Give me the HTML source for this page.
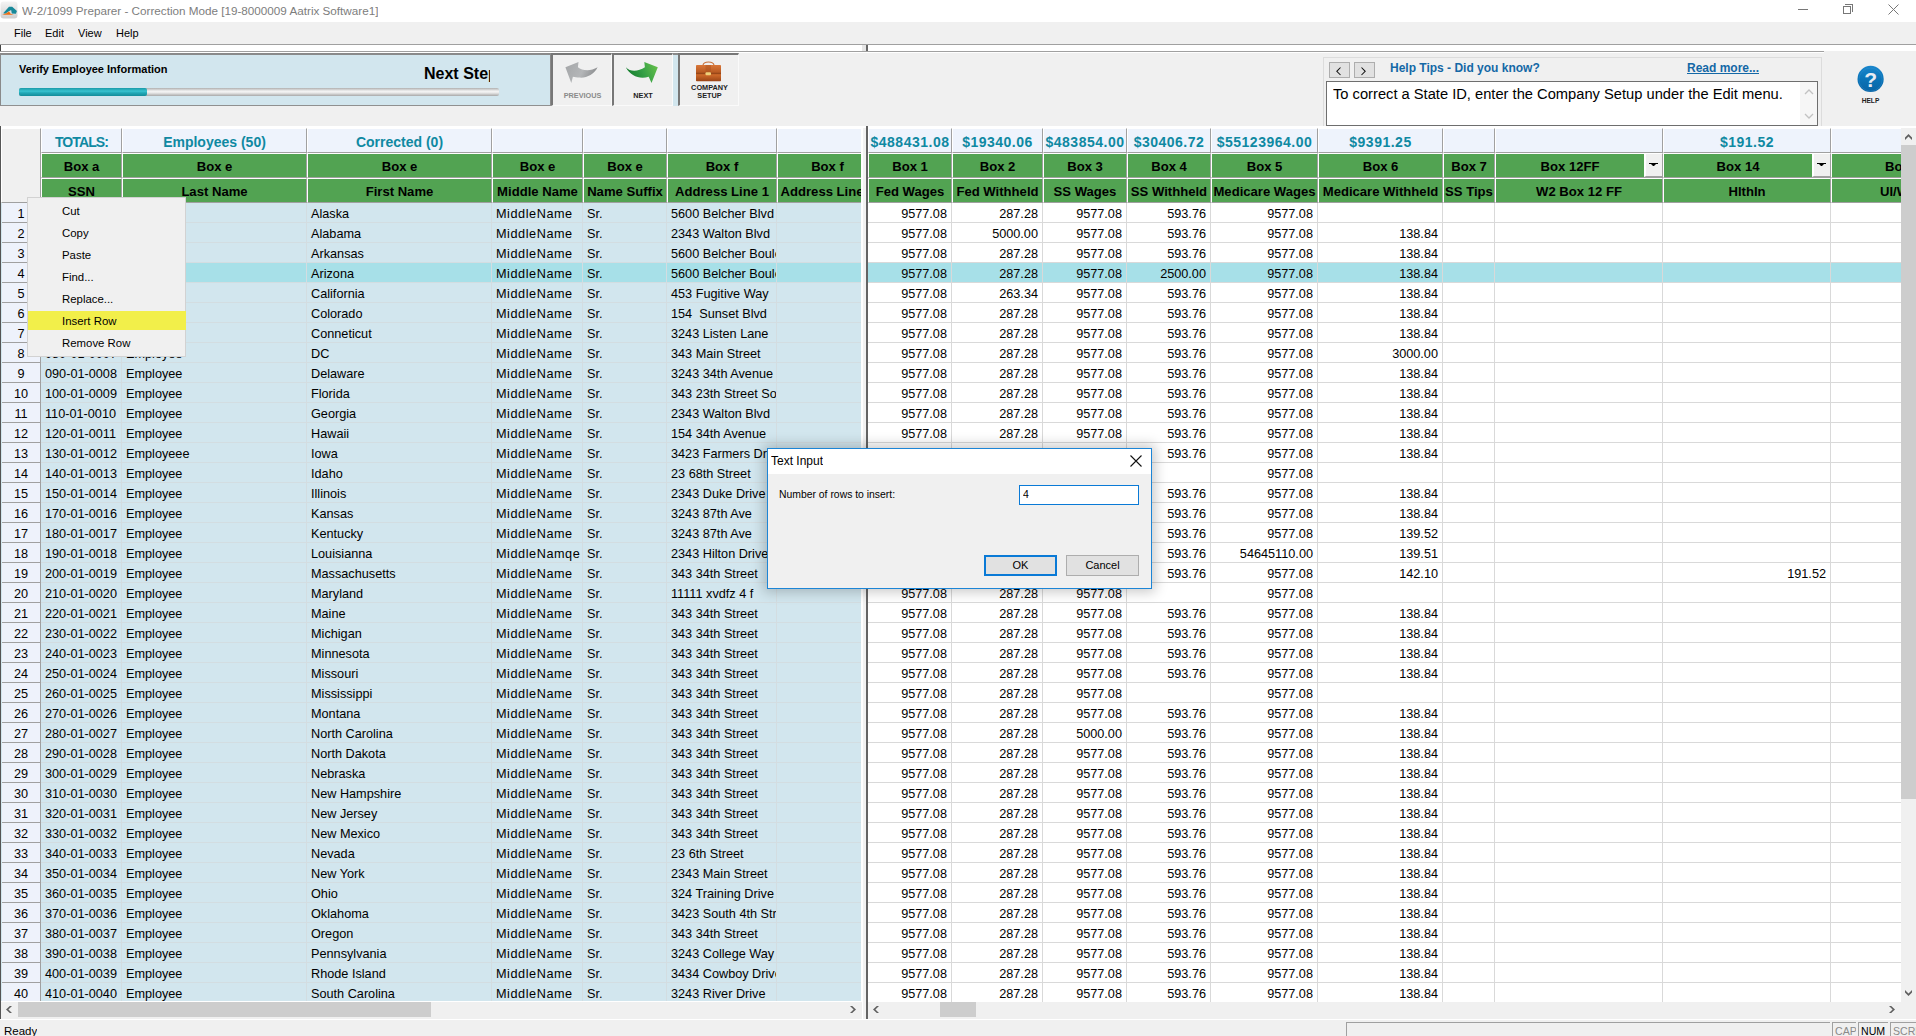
<!DOCTYPE html>
<html><head><meta charset="utf-8"><title>W-2/1099 Preparer</title>
<style>
*{box-sizing:border-box;margin:0;padding:0}
html,body{width:1916px;height:1036px;overflow:hidden;background:#f0f0f0;font-family:"Liberation Sans", sans-serif;color:#000}
.a{position:absolute}
.t{position:absolute;white-space:nowrap;overflow:hidden}
.hc{position:absolute;border-left:1px solid #fff;border-top:1px solid #fff;border-right:1px solid #a0a0a0;border-bottom:1px solid #a0a0a0;overflow:hidden;white-space:nowrap;text-align:center}
.tot{background:#eef3fc;color:#0f89a2;font-weight:bold;font-size:14px;line-height:26px}
.gr{background:#52a352;font-weight:bold;font-size:13.1px;line-height:25px}
.dc{position:absolute;height:20px;border-right:1px solid #d9d9d9;border-bottom:1px solid #d9d9d9;white-space:nowrap;overflow:hidden;font-size:12.7px;line-height:23px}
.lp .dc{border-color:#d3dde1}
.dl{padding-left:4px}
.dr{text-align:right;padding-right:4px}
.rh{position:absolute;left:2px;width:39px;height:20px;background:#eef2fb;border-right:1px solid #a0a0a0;border-bottom:1px solid #a0a0a0;text-align:center;font-size:12.7px;line-height:23px}
.mi{position:absolute;left:28px;width:158px;height:20px;font-size:11.4px;line-height:20px;padding-left:34px}
</style></head><body>

<div class="a" style="left:0;top:0;width:1916px;height:22px;background:#fff"></div>
<svg class="a" style="left:0px;top:1px" width="18" height="18" viewBox="0 0 17 17">
<defs><linearGradient id="ig" x1="0" y1="0" x2="0" y2="1"><stop offset="0" stop-color="#f4f4f4"/><stop offset="1" stop-color="#cfcfcf"/></linearGradient></defs>
<rect x="0.5" y="0.5" width="16" height="16" rx="3" fill="url(#ig)"/>
<path d="M3 11.5 L8.5 5.5 L11.5 5.5 L16 9.5 L15 12 L11.2 11.8 L10.5 8.5 L8 9.8 L5 12 Z" fill="#17899a"/>
<path d="M2 13 L6 11.5 L8.5 10 L10 12 L13 13 Z" fill="#ee6e12"/>
</svg>
<div class="t" style="left:22px;top:3px;font-size:11.7px;line-height:16px;color:#7d7d7d">W-2/1099 Preparer - Correction Mode [19-8000009 Aatrix Software1]</div>
<div class="a" style="left:1798px;top:9px;width:10px;height:1px;background:#777"></div>
<div class="a" style="left:1843px;top:6px;width:8px;height:8px;border:1px solid #777"></div>
<div class="a" style="left:1845px;top:4px;width:8px;height:8px;border-top:1px solid #777;border-right:1px solid #777"></div>
<svg class="a" style="left:1888px;top:4px" width="11" height="11" viewBox="0 0 11 11"><path d="M0.5 0.5 L10.5 10.5 M10.5 0.5 L0.5 10.5" stroke="#777" stroke-width="1"/></svg>
<div class="a" style="left:0;top:22px;width:1916px;height:22px;background:#f0f0f0"></div>
<div class="t" style="left:14px;top:26px;font-size:11px;line-height:14px">File</div>
<div class="t" style="left:45px;top:26px;font-size:11px;line-height:14px">Edit</div>
<div class="t" style="left:78px;top:26px;font-size:11px;line-height:14px">View</div>
<div class="t" style="left:116px;top:26px;font-size:11px;line-height:14px">Help</div>
<div class="a" style="left:0;top:44px;width:1916px;height:1px;background:#a0a0a0"></div>
<div class="a" style="left:0;top:45px;width:1916px;height:6px;background:#fff"></div>
<div class="a" style="left:0;top:45px;width:1px;height:7px;background:#444"></div>
<div class="a" style="left:0;top:51px;width:1824px;height:1px;background:#a0a0a0"></div>
<div class="a" style="left:0;top:52px;width:1824px;height:1px;background:#fff"></div>
<div class="a" style="left:862px;top:45px;width:4px;height:6px;background:#e6e6e6"></div>
<div class="a" style="left:866px;top:45px;width:2px;height:6px;background:#666"></div>
<div class="a" style="left:0;top:53px;width:552px;height:53px;background:#d2e6ee;border-top:2px solid #8a8a8a;border-left:1px solid #8a8a8a;border-bottom:1px solid #909090;border-right:2px solid #8a8a8a"></div>
<div class="t" style="left:19px;top:62px;font-size:11px;line-height:14px;font-weight:bold">Verify Employee Information</div>
<div class="a" style="left:19px;top:88px;width:480px;height:8px;border-radius:2px;background:linear-gradient(#b0b0b0,#f4f4f4 40%,#e8e8e8 60%,#a8a8a8)"></div>
<div class="a" style="left:19px;top:88px;width:128px;height:8px;border-radius:2px;background:linear-gradient(#1a9aa8,#38c3cf 40%,#22aab8 60%,#138c9a)"></div>
<div class="t" style="left:424px;top:63px;width:66px;font-size:16px;line-height:22px;font-weight:bold">Next Step</div>
<div class="a" style="left:551px;top:53px;width:61px;height:53px;background:#f0f0f0;border-top:2px solid #777;border-left:2px solid #777;border-right:1px solid #fafafa;border-bottom:1px solid #fafafa"></div>
<svg class="a" style="left:556px;top:56px" width="48" height="32" viewBox="0 0 48 32"><defs><linearGradient id="pg" x1="0" y1="0" x2="1" y2="0.3"><stop offset="0" stop-color="#a4a6a8"/><stop offset="0.6" stop-color="#b4b6b8"/><stop offset="1" stop-color="#8e9092"/></linearGradient></defs>
<path d="M22.5 6 L21.9 11.3 C26 14.5 34 16 41.6 11.3 C38 18.5 31 22 23.8 21.6 C21 21.4 18.6 20.9 16.9 20.7 L15.3 26.9 L9.4 11.3 Z" fill="url(#pg)"/></svg>
<div class="t" style="left:552px;top:91px;width:61px;text-align:center;font-size:7.3px;line-height:10px;font-weight:bold;color:#8a8a8a">PREVIOUS</div>
<div class="a" style="left:612px;top:53px;width:61px;height:53px;background:#f0f0f0;border-top:2px solid #777;border-left:2px solid #777;border-right:1px solid #fafafa;border-bottom:1px solid #fafafa"></div>
<svg class="a" style="left:612px;top:56px" width="50" height="32" viewBox="0 0 50 32"><defs><linearGradient id="ng" x1="0" y1="0.5" x2="1" y2="0.2"><stop offset="0" stop-color="#137a2c"/><stop offset="0.5" stop-color="#35a046"/><stop offset="1" stop-color="#66c04a"/></linearGradient></defs>
<path d="M13.8 11.3 C18.5 16.5 26.5 15.5 32.9 11.3 L32.3 6 L45.8 11.3 L39.5 26.9 L36.7 20.7 C28.5 23.5 18.5 20.5 13.8 11.3 Z" fill="url(#ng)"/></svg>
<div class="t" style="left:613px;top:91px;width:60px;text-align:center;font-size:7.3px;line-height:10px;font-weight:bold;color:#222">NEXT</div>
<div class="a" style="left:673px;top:53px;width:6px;height:53px;background:#d2e6ee;border-top:2px solid #8a8a8a"></div>
<div class="a" style="left:678px;top:53px;width:61px;height:53px;background:#f0f0f0;border-top:2px solid #777;border-left:2px solid #777;border-right:1px solid #fafafa;border-bottom:1px solid #fafafa"></div>
<svg class="a" style="left:695px;top:61px" width="27" height="22" viewBox="0 0 27 22"><defs><linearGradient id="bg1" x1="0" y1="0" x2="0" y2="1"><stop offset="0" stop-color="#d9773a"/><stop offset="0.45" stop-color="#b85a22"/><stop offset="0.5" stop-color="#8a3e14"/><stop offset="0.6" stop-color="#cf6a2a"/><stop offset="1" stop-color="#9a4416"/></linearGradient></defs>
<path d="M8 4.2 Q8.5 1 13.5 1 Q18.5 1 19 4.2" fill="none" stroke="#c8703a" stroke-width="1.1"/>
<rect x="1" y="4" width="25" height="16.3" rx="0.8" fill="url(#bg1)"/>
<rect x="10.5" y="4" width="5.5" height="7.5" fill="#a8501c" opacity="0.45"/>
<rect x="10.5" y="11.2" width="5.5" height="3" rx="1" fill="#eed07a"/></svg>
<div class="t" style="left:679px;top:84px;width:61px;text-align:center;font-size:7.3px;line-height:8px;font-weight:bold;color:#222">COMPANY<br>SETUP</div>
<div class="a" style="left:1323px;top:57px;width:499px;height:72px;border-left:1px solid #dcdcdc;border-top:1px solid #dcdcdc;border-right:1px solid #dcdcdc"></div>
<div class="a" style="left:1329px;top:62px;width:21px;height:16px;background:#e1e1e1;border:1px solid #adadad"></div>
<svg class="a" style="left:1329px;top:62px" width="21" height="18" viewBox="0 0 21 18"><path d="M11.5 5.5 L7.8 9.3 L11.5 13" fill="none" stroke="#111" stroke-width="1.05"/></svg>
<div class="a" style="left:1354px;top:62px;width:21px;height:16px;background:#e1e1e1;border:1px solid #adadad"></div>
<svg class="a" style="left:1354px;top:62px" width="21" height="18" viewBox="0 0 21 18"><path d="M7.5 5.5 L11.2 9.3 L7.5 13" fill="none" stroke="#111" stroke-width="1.05"/></svg>
<div class="t" style="left:1390px;top:61px;font-size:12px;line-height:15px;font-weight:bold;color:#1468a6">Help Tips - Did you know?</div>
<div class="t" style="left:1687px;top:61px;font-size:12px;line-height:15px;font-weight:bold;color:#1468a6;text-decoration:underline">Read more...</div>
<div class="a" style="left:1326px;top:81px;width:492px;height:45px;background:#fff;border:1px solid #6e6e6e"></div>
<div class="t" style="left:1333px;top:85px;font-size:14.7px;line-height:18px">To correct a State ID, enter the Company Setup under the Edit menu.</div>
<div class="a" style="left:1800px;top:82px;width:17px;height:43px;background:#f6f6f6"></div>
<svg class="a" style="left:1804px;top:86px" width="10" height="36" viewBox="0 0 10 36"><path d="M1 8 L5 4 L9 8 M1 28 L5 32 L9 28" fill="none" stroke="#c2c2c2" stroke-width="1.3"/></svg>
<svg class="a" style="left:1856px;top:65px" width="29" height="29" viewBox="0 0 29 29"><defs><linearGradient id="hg" x1="0" y1="0" x2="0" y2="1"><stop offset="0" stop-color="#1a86cc"/><stop offset="0.5" stop-color="#0b74b8"/><stop offset="1" stop-color="#0a64a4"/></linearGradient></defs>
<circle cx="14.6" cy="13.9" r="13.1" fill="url(#hg)"/>
<circle cx="14.6" cy="14.6" r="11.6" fill="none" stroke="#3a98d6" stroke-width="0.6" opacity="0.5"/>
<text x="14.6" y="22.3" text-anchor="middle" font-family="Liberation Sans" font-weight="bold" font-size="21" fill="#e8ecf4">?</text></svg>
<div class="t" style="left:1856px;top:96px;width:29px;text-align:center;font-size:6.6px;line-height:9px;font-weight:bold;color:#222">HELP</div>
<div class="a" style="left:0;top:126px;width:1px;height:893px;background:#555"></div>
<div class="a" style="left:1px;top:127px;width:861px;height:1px;background:#fff"></div>
<div class="a" style="left:868px;top:127px;width:1033px;height:1px;background:#fff"></div>
<div class="a" style="left:1px;top:127px;width:860px;height:875px;background:#d2e6ee"></div>
<div class="a" style="left:1px;top:128px;width:40px;height:75px;background:#f0f0f0;border-right:1px solid #a0a0a0;border-bottom:1px solid #a0a0a0;border-left:1px solid #fff;border-top:1px solid #fff"></div>
<div class="a " style="left:41px;top:127px;width:820px;height:876px;overflow:hidden">
<div class="hc tot" style="left:0px;top:1px;width:81px;height:25px;letter-spacing:-0.9px;">TOTALS:</div>
<div class="hc gr" style="left:0px;top:26px;width:81px;height:25px;">Box a</div>
<div class="hc gr" style="left:0px;top:51px;width:81px;height:25px;">SSN</div>
<div class="hc tot" style="left:81px;top:1px;width:185px;height:25px;">Employees (50)</div>
<div class="hc gr" style="left:81px;top:26px;width:185px;height:25px;">Box e</div>
<div class="hc gr" style="left:81px;top:51px;width:185px;height:25px;">Last Name</div>
<div class="hc tot" style="left:266px;top:1px;width:185px;height:25px;">Corrected (0)</div>
<div class="hc gr" style="left:266px;top:26px;width:185px;height:25px;">Box e</div>
<div class="hc gr" style="left:266px;top:51px;width:185px;height:25px;">First Name</div>
<div class="hc tot" style="left:451px;top:1px;width:91px;height:25px;"></div>
<div class="hc gr" style="left:451px;top:26px;width:91px;height:25px;">Box e</div>
<div class="hc gr" style="left:451px;top:51px;width:91px;height:25px;">Middle Name</div>
<div class="hc tot" style="left:542px;top:1px;width:84px;height:25px;"></div>
<div class="hc gr" style="left:542px;top:26px;width:84px;height:25px;">Box e</div>
<div class="hc gr" style="left:542px;top:51px;width:84px;height:25px;">Name Suffix</div>
<div class="hc tot" style="left:626px;top:1px;width:110px;height:25px;"></div>
<div class="hc gr" style="left:626px;top:26px;width:110px;height:25px;">Box f</div>
<div class="hc gr" style="left:626px;top:51px;width:110px;height:25px;">Address Line 1</div>
<div class="hc tot" style="left:736px;top:1px;width:101px;height:25px;"></div>
<div class="hc gr" style="left:736px;top:26px;width:101px;height:25px;">Box f</div>
<div class="hc gr" style="left:736px;top:51px;width:101px;height:25px;">Address Line 2</div>
</div>
<div class="a lp" style="left:41px;top:203px;width:820px;height:799px;overflow:hidden">
<div class="dc dl" style="left:0px;top:0px;width:81px;background:#d2e6ee;">010-01-0000</div>
<div class="dc dl" style="left:81px;top:0px;width:185px;background:#d2e6ee;">Employee</div>
<div class="dc dl" style="left:266px;top:0px;width:185px;background:#d2e6ee;">Alaska</div>
<div class="dc dl" style="left:451px;top:0px;width:91px;background:#d2e6ee;letter-spacing:0.55px;">MiddleName</div>
<div class="dc dl" style="left:542px;top:0px;width:84px;background:#d2e6ee;">Sr.</div>
<div class="dc dl" style="left:626px;top:0px;width:110px;background:#d2e6ee;">5600 Belcher Blvd</div>
<div class="dc dl" style="left:736px;top:0px;width:101px;background:#d2e6ee;"></div>
<div class="dc dl" style="left:0px;top:20px;width:81px;background:#d2e6ee;">020-01-0001</div>
<div class="dc dl" style="left:81px;top:20px;width:185px;background:#d2e6ee;">Employee</div>
<div class="dc dl" style="left:266px;top:20px;width:185px;background:#d2e6ee;">Alabama</div>
<div class="dc dl" style="left:451px;top:20px;width:91px;background:#d2e6ee;letter-spacing:0.55px;">MiddleName</div>
<div class="dc dl" style="left:542px;top:20px;width:84px;background:#d2e6ee;">Sr.</div>
<div class="dc dl" style="left:626px;top:20px;width:110px;background:#d2e6ee;">2343 Walton Blvd</div>
<div class="dc dl" style="left:736px;top:20px;width:101px;background:#d2e6ee;"></div>
<div class="dc dl" style="left:0px;top:40px;width:81px;background:#d2e6ee;">030-01-0002</div>
<div class="dc dl" style="left:81px;top:40px;width:185px;background:#d2e6ee;">Employee</div>
<div class="dc dl" style="left:266px;top:40px;width:185px;background:#d2e6ee;">Arkansas</div>
<div class="dc dl" style="left:451px;top:40px;width:91px;background:#d2e6ee;letter-spacing:0.55px;">MiddleName</div>
<div class="dc dl" style="left:542px;top:40px;width:84px;background:#d2e6ee;">Sr.</div>
<div class="dc dl" style="left:626px;top:40px;width:110px;background:#d2e6ee;">5600 Belcher Boulevard</div>
<div class="dc dl" style="left:736px;top:40px;width:101px;background:#d2e6ee;"></div>
<div class="dc dl" style="left:0px;top:60px;width:81px;background:#a7e0e8;">040-01-0003</div>
<div class="dc dl" style="left:81px;top:60px;width:185px;background:#a7e0e8;">Employee</div>
<div class="dc dl" style="left:266px;top:60px;width:185px;background:#a7e0e8;">Arizona</div>
<div class="dc dl" style="left:451px;top:60px;width:91px;background:#a7e0e8;letter-spacing:0.55px;">MiddleName</div>
<div class="dc dl" style="left:542px;top:60px;width:84px;background:#a7e0e8;">Sr.</div>
<div class="dc dl" style="left:626px;top:60px;width:110px;background:#a7e0e8;">5600 Belcher Boulevard</div>
<div class="dc dl" style="left:736px;top:60px;width:101px;background:#a7e0e8;"></div>
<div class="dc dl" style="left:0px;top:80px;width:81px;background:#d2e6ee;">050-01-0004</div>
<div class="dc dl" style="left:81px;top:80px;width:185px;background:#d2e6ee;">Employee</div>
<div class="dc dl" style="left:266px;top:80px;width:185px;background:#d2e6ee;">California</div>
<div class="dc dl" style="left:451px;top:80px;width:91px;background:#d2e6ee;letter-spacing:0.55px;">MiddleName</div>
<div class="dc dl" style="left:542px;top:80px;width:84px;background:#d2e6ee;">Sr.</div>
<div class="dc dl" style="left:626px;top:80px;width:110px;background:#d2e6ee;">453 Fugitive Way</div>
<div class="dc dl" style="left:736px;top:80px;width:101px;background:#d2e6ee;"></div>
<div class="dc dl" style="left:0px;top:100px;width:81px;background:#d2e6ee;">060-01-0005</div>
<div class="dc dl" style="left:81px;top:100px;width:185px;background:#d2e6ee;">Employee</div>
<div class="dc dl" style="left:266px;top:100px;width:185px;background:#d2e6ee;">Colorado</div>
<div class="dc dl" style="left:451px;top:100px;width:91px;background:#d2e6ee;letter-spacing:0.55px;">MiddleName</div>
<div class="dc dl" style="left:542px;top:100px;width:84px;background:#d2e6ee;">Sr.</div>
<div class="dc dl" style="left:626px;top:100px;width:110px;background:#d2e6ee;">154  Sunset Blvd</div>
<div class="dc dl" style="left:736px;top:100px;width:101px;background:#d2e6ee;"></div>
<div class="dc dl" style="left:0px;top:120px;width:81px;background:#d2e6ee;">070-01-0006</div>
<div class="dc dl" style="left:81px;top:120px;width:185px;background:#d2e6ee;">Employee</div>
<div class="dc dl" style="left:266px;top:120px;width:185px;background:#d2e6ee;">Conneticut</div>
<div class="dc dl" style="left:451px;top:120px;width:91px;background:#d2e6ee;letter-spacing:0.55px;">MiddleName</div>
<div class="dc dl" style="left:542px;top:120px;width:84px;background:#d2e6ee;">Sr.</div>
<div class="dc dl" style="left:626px;top:120px;width:110px;background:#d2e6ee;">3243 Listen Lane</div>
<div class="dc dl" style="left:736px;top:120px;width:101px;background:#d2e6ee;"></div>
<div class="dc dl" style="left:0px;top:140px;width:81px;background:#d2e6ee;">080-01-0007</div>
<div class="dc dl" style="left:81px;top:140px;width:185px;background:#d2e6ee;">Employee</div>
<div class="dc dl" style="left:266px;top:140px;width:185px;background:#d2e6ee;">DC</div>
<div class="dc dl" style="left:451px;top:140px;width:91px;background:#d2e6ee;letter-spacing:0.55px;">MiddleName</div>
<div class="dc dl" style="left:542px;top:140px;width:84px;background:#d2e6ee;">Sr.</div>
<div class="dc dl" style="left:626px;top:140px;width:110px;background:#d2e6ee;">343 Main Street</div>
<div class="dc dl" style="left:736px;top:140px;width:101px;background:#d2e6ee;"></div>
<div class="dc dl" style="left:0px;top:160px;width:81px;background:#d2e6ee;">090-01-0008</div>
<div class="dc dl" style="left:81px;top:160px;width:185px;background:#d2e6ee;">Employee</div>
<div class="dc dl" style="left:266px;top:160px;width:185px;background:#d2e6ee;">Delaware</div>
<div class="dc dl" style="left:451px;top:160px;width:91px;background:#d2e6ee;letter-spacing:0.55px;">MiddleName</div>
<div class="dc dl" style="left:542px;top:160px;width:84px;background:#d2e6ee;">Sr.</div>
<div class="dc dl" style="left:626px;top:160px;width:110px;background:#d2e6ee;">3243 34th Avenue</div>
<div class="dc dl" style="left:736px;top:160px;width:101px;background:#d2e6ee;"></div>
<div class="dc dl" style="left:0px;top:180px;width:81px;background:#d2e6ee;">100-01-0009</div>
<div class="dc dl" style="left:81px;top:180px;width:185px;background:#d2e6ee;">Employee</div>
<div class="dc dl" style="left:266px;top:180px;width:185px;background:#d2e6ee;">Florida</div>
<div class="dc dl" style="left:451px;top:180px;width:91px;background:#d2e6ee;letter-spacing:0.55px;">MiddleName</div>
<div class="dc dl" style="left:542px;top:180px;width:84px;background:#d2e6ee;">Sr.</div>
<div class="dc dl" style="left:626px;top:180px;width:110px;background:#d2e6ee;">343 23th Street South</div>
<div class="dc dl" style="left:736px;top:180px;width:101px;background:#d2e6ee;"></div>
<div class="dc dl" style="left:0px;top:200px;width:81px;background:#d2e6ee;">110-01-0010</div>
<div class="dc dl" style="left:81px;top:200px;width:185px;background:#d2e6ee;">Employee</div>
<div class="dc dl" style="left:266px;top:200px;width:185px;background:#d2e6ee;">Georgia</div>
<div class="dc dl" style="left:451px;top:200px;width:91px;background:#d2e6ee;letter-spacing:0.55px;">MiddleName</div>
<div class="dc dl" style="left:542px;top:200px;width:84px;background:#d2e6ee;">Sr.</div>
<div class="dc dl" style="left:626px;top:200px;width:110px;background:#d2e6ee;">2343 Walton Blvd</div>
<div class="dc dl" style="left:736px;top:200px;width:101px;background:#d2e6ee;"></div>
<div class="dc dl" style="left:0px;top:220px;width:81px;background:#d2e6ee;">120-01-0011</div>
<div class="dc dl" style="left:81px;top:220px;width:185px;background:#d2e6ee;">Employee</div>
<div class="dc dl" style="left:266px;top:220px;width:185px;background:#d2e6ee;">Hawaii</div>
<div class="dc dl" style="left:451px;top:220px;width:91px;background:#d2e6ee;letter-spacing:0.55px;">MiddleName</div>
<div class="dc dl" style="left:542px;top:220px;width:84px;background:#d2e6ee;">Sr.</div>
<div class="dc dl" style="left:626px;top:220px;width:110px;background:#d2e6ee;">154 34th Avenue</div>
<div class="dc dl" style="left:736px;top:220px;width:101px;background:#d2e6ee;"></div>
<div class="dc dl" style="left:0px;top:240px;width:81px;background:#d2e6ee;">130-01-0012</div>
<div class="dc dl" style="left:81px;top:240px;width:185px;background:#d2e6ee;">Employeee</div>
<div class="dc dl" style="left:266px;top:240px;width:185px;background:#d2e6ee;">Iowa</div>
<div class="dc dl" style="left:451px;top:240px;width:91px;background:#d2e6ee;letter-spacing:0.55px;">MiddleName</div>
<div class="dc dl" style="left:542px;top:240px;width:84px;background:#d2e6ee;">Sr.</div>
<div class="dc dl" style="left:626px;top:240px;width:110px;background:#d2e6ee;">3423 Farmers Drive</div>
<div class="dc dl" style="left:736px;top:240px;width:101px;background:#d2e6ee;"></div>
<div class="dc dl" style="left:0px;top:260px;width:81px;background:#d2e6ee;">140-01-0013</div>
<div class="dc dl" style="left:81px;top:260px;width:185px;background:#d2e6ee;">Employee</div>
<div class="dc dl" style="left:266px;top:260px;width:185px;background:#d2e6ee;">Idaho</div>
<div class="dc dl" style="left:451px;top:260px;width:91px;background:#d2e6ee;letter-spacing:0.55px;">MiddleName</div>
<div class="dc dl" style="left:542px;top:260px;width:84px;background:#d2e6ee;">Sr.</div>
<div class="dc dl" style="left:626px;top:260px;width:110px;background:#d2e6ee;">23 68th Street</div>
<div class="dc dl" style="left:736px;top:260px;width:101px;background:#d2e6ee;"></div>
<div class="dc dl" style="left:0px;top:280px;width:81px;background:#d2e6ee;">150-01-0014</div>
<div class="dc dl" style="left:81px;top:280px;width:185px;background:#d2e6ee;">Employee</div>
<div class="dc dl" style="left:266px;top:280px;width:185px;background:#d2e6ee;">Illinois</div>
<div class="dc dl" style="left:451px;top:280px;width:91px;background:#d2e6ee;letter-spacing:0.55px;">MiddleName</div>
<div class="dc dl" style="left:542px;top:280px;width:84px;background:#d2e6ee;">Sr.</div>
<div class="dc dl" style="left:626px;top:280px;width:110px;background:#d2e6ee;">2343 Duke Drive</div>
<div class="dc dl" style="left:736px;top:280px;width:101px;background:#d2e6ee;"></div>
<div class="dc dl" style="left:0px;top:300px;width:81px;background:#d2e6ee;">170-01-0016</div>
<div class="dc dl" style="left:81px;top:300px;width:185px;background:#d2e6ee;">Employee</div>
<div class="dc dl" style="left:266px;top:300px;width:185px;background:#d2e6ee;">Kansas</div>
<div class="dc dl" style="left:451px;top:300px;width:91px;background:#d2e6ee;letter-spacing:0.55px;">MiddleName</div>
<div class="dc dl" style="left:542px;top:300px;width:84px;background:#d2e6ee;">Sr.</div>
<div class="dc dl" style="left:626px;top:300px;width:110px;background:#d2e6ee;">3243 87th Ave</div>
<div class="dc dl" style="left:736px;top:300px;width:101px;background:#d2e6ee;"></div>
<div class="dc dl" style="left:0px;top:320px;width:81px;background:#d2e6ee;">180-01-0017</div>
<div class="dc dl" style="left:81px;top:320px;width:185px;background:#d2e6ee;">Employee</div>
<div class="dc dl" style="left:266px;top:320px;width:185px;background:#d2e6ee;">Kentucky</div>
<div class="dc dl" style="left:451px;top:320px;width:91px;background:#d2e6ee;letter-spacing:0.55px;">MiddleName</div>
<div class="dc dl" style="left:542px;top:320px;width:84px;background:#d2e6ee;">Sr.</div>
<div class="dc dl" style="left:626px;top:320px;width:110px;background:#d2e6ee;">3243 87th Ave</div>
<div class="dc dl" style="left:736px;top:320px;width:101px;background:#d2e6ee;"></div>
<div class="dc dl" style="left:0px;top:340px;width:81px;background:#d2e6ee;">190-01-0018</div>
<div class="dc dl" style="left:81px;top:340px;width:185px;background:#d2e6ee;">Employee</div>
<div class="dc dl" style="left:266px;top:340px;width:185px;background:#d2e6ee;">Louisianna</div>
<div class="dc dl" style="left:451px;top:340px;width:91px;background:#d2e6ee;letter-spacing:0.55px;">MiddleNamqe</div>
<div class="dc dl" style="left:542px;top:340px;width:84px;background:#d2e6ee;">Sr.</div>
<div class="dc dl" style="left:626px;top:340px;width:110px;background:#d2e6ee;">2343 Hilton Drive</div>
<div class="dc dl" style="left:736px;top:340px;width:101px;background:#d2e6ee;"></div>
<div class="dc dl" style="left:0px;top:360px;width:81px;background:#d2e6ee;">200-01-0019</div>
<div class="dc dl" style="left:81px;top:360px;width:185px;background:#d2e6ee;">Employee</div>
<div class="dc dl" style="left:266px;top:360px;width:185px;background:#d2e6ee;">Massachusetts</div>
<div class="dc dl" style="left:451px;top:360px;width:91px;background:#d2e6ee;letter-spacing:0.55px;">MiddleName</div>
<div class="dc dl" style="left:542px;top:360px;width:84px;background:#d2e6ee;">Sr.</div>
<div class="dc dl" style="left:626px;top:360px;width:110px;background:#d2e6ee;">343 34th Street</div>
<div class="dc dl" style="left:736px;top:360px;width:101px;background:#d2e6ee;"></div>
<div class="dc dl" style="left:0px;top:380px;width:81px;background:#d2e6ee;">210-01-0020</div>
<div class="dc dl" style="left:81px;top:380px;width:185px;background:#d2e6ee;">Employee</div>
<div class="dc dl" style="left:266px;top:380px;width:185px;background:#d2e6ee;">Maryland</div>
<div class="dc dl" style="left:451px;top:380px;width:91px;background:#d2e6ee;letter-spacing:0.55px;">MiddleName</div>
<div class="dc dl" style="left:542px;top:380px;width:84px;background:#d2e6ee;">Sr.</div>
<div class="dc dl" style="left:626px;top:380px;width:110px;background:#d2e6ee;">11111 xvdfz 4 f</div>
<div class="dc dl" style="left:736px;top:380px;width:101px;background:#d2e6ee;"></div>
<div class="dc dl" style="left:0px;top:400px;width:81px;background:#d2e6ee;">220-01-0021</div>
<div class="dc dl" style="left:81px;top:400px;width:185px;background:#d2e6ee;">Employee</div>
<div class="dc dl" style="left:266px;top:400px;width:185px;background:#d2e6ee;">Maine</div>
<div class="dc dl" style="left:451px;top:400px;width:91px;background:#d2e6ee;letter-spacing:0.55px;">MiddleName</div>
<div class="dc dl" style="left:542px;top:400px;width:84px;background:#d2e6ee;">Sr.</div>
<div class="dc dl" style="left:626px;top:400px;width:110px;background:#d2e6ee;">343 34th Street</div>
<div class="dc dl" style="left:736px;top:400px;width:101px;background:#d2e6ee;"></div>
<div class="dc dl" style="left:0px;top:420px;width:81px;background:#d2e6ee;">230-01-0022</div>
<div class="dc dl" style="left:81px;top:420px;width:185px;background:#d2e6ee;">Employee</div>
<div class="dc dl" style="left:266px;top:420px;width:185px;background:#d2e6ee;">Michigan</div>
<div class="dc dl" style="left:451px;top:420px;width:91px;background:#d2e6ee;letter-spacing:0.55px;">MiddleName</div>
<div class="dc dl" style="left:542px;top:420px;width:84px;background:#d2e6ee;">Sr.</div>
<div class="dc dl" style="left:626px;top:420px;width:110px;background:#d2e6ee;">343 34th Street</div>
<div class="dc dl" style="left:736px;top:420px;width:101px;background:#d2e6ee;"></div>
<div class="dc dl" style="left:0px;top:440px;width:81px;background:#d2e6ee;">240-01-0023</div>
<div class="dc dl" style="left:81px;top:440px;width:185px;background:#d2e6ee;">Employee</div>
<div class="dc dl" style="left:266px;top:440px;width:185px;background:#d2e6ee;">Minnesota</div>
<div class="dc dl" style="left:451px;top:440px;width:91px;background:#d2e6ee;letter-spacing:0.55px;">MiddleName</div>
<div class="dc dl" style="left:542px;top:440px;width:84px;background:#d2e6ee;">Sr.</div>
<div class="dc dl" style="left:626px;top:440px;width:110px;background:#d2e6ee;">343 34th Street</div>
<div class="dc dl" style="left:736px;top:440px;width:101px;background:#d2e6ee;"></div>
<div class="dc dl" style="left:0px;top:460px;width:81px;background:#d2e6ee;">250-01-0024</div>
<div class="dc dl" style="left:81px;top:460px;width:185px;background:#d2e6ee;">Employee</div>
<div class="dc dl" style="left:266px;top:460px;width:185px;background:#d2e6ee;">Missouri</div>
<div class="dc dl" style="left:451px;top:460px;width:91px;background:#d2e6ee;letter-spacing:0.55px;">MiddleName</div>
<div class="dc dl" style="left:542px;top:460px;width:84px;background:#d2e6ee;">Sr.</div>
<div class="dc dl" style="left:626px;top:460px;width:110px;background:#d2e6ee;">343 34th Street</div>
<div class="dc dl" style="left:736px;top:460px;width:101px;background:#d2e6ee;"></div>
<div class="dc dl" style="left:0px;top:480px;width:81px;background:#d2e6ee;">260-01-0025</div>
<div class="dc dl" style="left:81px;top:480px;width:185px;background:#d2e6ee;">Employee</div>
<div class="dc dl" style="left:266px;top:480px;width:185px;background:#d2e6ee;">Mississippi</div>
<div class="dc dl" style="left:451px;top:480px;width:91px;background:#d2e6ee;letter-spacing:0.55px;">MiddleName</div>
<div class="dc dl" style="left:542px;top:480px;width:84px;background:#d2e6ee;">Sr.</div>
<div class="dc dl" style="left:626px;top:480px;width:110px;background:#d2e6ee;">343 34th Street</div>
<div class="dc dl" style="left:736px;top:480px;width:101px;background:#d2e6ee;"></div>
<div class="dc dl" style="left:0px;top:500px;width:81px;background:#d2e6ee;">270-01-0026</div>
<div class="dc dl" style="left:81px;top:500px;width:185px;background:#d2e6ee;">Employee</div>
<div class="dc dl" style="left:266px;top:500px;width:185px;background:#d2e6ee;">Montana</div>
<div class="dc dl" style="left:451px;top:500px;width:91px;background:#d2e6ee;letter-spacing:0.55px;">MiddleName</div>
<div class="dc dl" style="left:542px;top:500px;width:84px;background:#d2e6ee;">Sr.</div>
<div class="dc dl" style="left:626px;top:500px;width:110px;background:#d2e6ee;">343 34th Street</div>
<div class="dc dl" style="left:736px;top:500px;width:101px;background:#d2e6ee;"></div>
<div class="dc dl" style="left:0px;top:520px;width:81px;background:#d2e6ee;">280-01-0027</div>
<div class="dc dl" style="left:81px;top:520px;width:185px;background:#d2e6ee;">Employee</div>
<div class="dc dl" style="left:266px;top:520px;width:185px;background:#d2e6ee;">North Carolina</div>
<div class="dc dl" style="left:451px;top:520px;width:91px;background:#d2e6ee;letter-spacing:0.55px;">MiddleName</div>
<div class="dc dl" style="left:542px;top:520px;width:84px;background:#d2e6ee;">Sr.</div>
<div class="dc dl" style="left:626px;top:520px;width:110px;background:#d2e6ee;">343 34th Street</div>
<div class="dc dl" style="left:736px;top:520px;width:101px;background:#d2e6ee;"></div>
<div class="dc dl" style="left:0px;top:540px;width:81px;background:#d2e6ee;">290-01-0028</div>
<div class="dc dl" style="left:81px;top:540px;width:185px;background:#d2e6ee;">Employee</div>
<div class="dc dl" style="left:266px;top:540px;width:185px;background:#d2e6ee;">North Dakota</div>
<div class="dc dl" style="left:451px;top:540px;width:91px;background:#d2e6ee;letter-spacing:0.55px;">MiddleName</div>
<div class="dc dl" style="left:542px;top:540px;width:84px;background:#d2e6ee;">Sr.</div>
<div class="dc dl" style="left:626px;top:540px;width:110px;background:#d2e6ee;">343 34th Street</div>
<div class="dc dl" style="left:736px;top:540px;width:101px;background:#d2e6ee;"></div>
<div class="dc dl" style="left:0px;top:560px;width:81px;background:#d2e6ee;">300-01-0029</div>
<div class="dc dl" style="left:81px;top:560px;width:185px;background:#d2e6ee;">Employee</div>
<div class="dc dl" style="left:266px;top:560px;width:185px;background:#d2e6ee;">Nebraska</div>
<div class="dc dl" style="left:451px;top:560px;width:91px;background:#d2e6ee;letter-spacing:0.55px;">MiddleName</div>
<div class="dc dl" style="left:542px;top:560px;width:84px;background:#d2e6ee;">Sr.</div>
<div class="dc dl" style="left:626px;top:560px;width:110px;background:#d2e6ee;">343 34th Street</div>
<div class="dc dl" style="left:736px;top:560px;width:101px;background:#d2e6ee;"></div>
<div class="dc dl" style="left:0px;top:580px;width:81px;background:#d2e6ee;">310-01-0030</div>
<div class="dc dl" style="left:81px;top:580px;width:185px;background:#d2e6ee;">Employee</div>
<div class="dc dl" style="left:266px;top:580px;width:185px;background:#d2e6ee;">New Hampshire</div>
<div class="dc dl" style="left:451px;top:580px;width:91px;background:#d2e6ee;letter-spacing:0.55px;">MiddleName</div>
<div class="dc dl" style="left:542px;top:580px;width:84px;background:#d2e6ee;">Sr.</div>
<div class="dc dl" style="left:626px;top:580px;width:110px;background:#d2e6ee;">343 34th Street</div>
<div class="dc dl" style="left:736px;top:580px;width:101px;background:#d2e6ee;"></div>
<div class="dc dl" style="left:0px;top:600px;width:81px;background:#d2e6ee;">320-01-0031</div>
<div class="dc dl" style="left:81px;top:600px;width:185px;background:#d2e6ee;">Employee</div>
<div class="dc dl" style="left:266px;top:600px;width:185px;background:#d2e6ee;">New Jersey</div>
<div class="dc dl" style="left:451px;top:600px;width:91px;background:#d2e6ee;letter-spacing:0.55px;">MiddleName</div>
<div class="dc dl" style="left:542px;top:600px;width:84px;background:#d2e6ee;">Sr.</div>
<div class="dc dl" style="left:626px;top:600px;width:110px;background:#d2e6ee;">343 34th Street</div>
<div class="dc dl" style="left:736px;top:600px;width:101px;background:#d2e6ee;"></div>
<div class="dc dl" style="left:0px;top:620px;width:81px;background:#d2e6ee;">330-01-0032</div>
<div class="dc dl" style="left:81px;top:620px;width:185px;background:#d2e6ee;">Employee</div>
<div class="dc dl" style="left:266px;top:620px;width:185px;background:#d2e6ee;">New Mexico</div>
<div class="dc dl" style="left:451px;top:620px;width:91px;background:#d2e6ee;letter-spacing:0.55px;">MiddleName</div>
<div class="dc dl" style="left:542px;top:620px;width:84px;background:#d2e6ee;">Sr.</div>
<div class="dc dl" style="left:626px;top:620px;width:110px;background:#d2e6ee;">343 34th Street</div>
<div class="dc dl" style="left:736px;top:620px;width:101px;background:#d2e6ee;"></div>
<div class="dc dl" style="left:0px;top:640px;width:81px;background:#d2e6ee;">340-01-0033</div>
<div class="dc dl" style="left:81px;top:640px;width:185px;background:#d2e6ee;">Employee</div>
<div class="dc dl" style="left:266px;top:640px;width:185px;background:#d2e6ee;">Nevada</div>
<div class="dc dl" style="left:451px;top:640px;width:91px;background:#d2e6ee;letter-spacing:0.55px;">MiddleName</div>
<div class="dc dl" style="left:542px;top:640px;width:84px;background:#d2e6ee;">Sr.</div>
<div class="dc dl" style="left:626px;top:640px;width:110px;background:#d2e6ee;">23 6th Street</div>
<div class="dc dl" style="left:736px;top:640px;width:101px;background:#d2e6ee;"></div>
<div class="dc dl" style="left:0px;top:660px;width:81px;background:#d2e6ee;">350-01-0034</div>
<div class="dc dl" style="left:81px;top:660px;width:185px;background:#d2e6ee;">Employee</div>
<div class="dc dl" style="left:266px;top:660px;width:185px;background:#d2e6ee;">New York</div>
<div class="dc dl" style="left:451px;top:660px;width:91px;background:#d2e6ee;letter-spacing:0.55px;">MiddleName</div>
<div class="dc dl" style="left:542px;top:660px;width:84px;background:#d2e6ee;">Sr.</div>
<div class="dc dl" style="left:626px;top:660px;width:110px;background:#d2e6ee;">2343 Main Street</div>
<div class="dc dl" style="left:736px;top:660px;width:101px;background:#d2e6ee;"></div>
<div class="dc dl" style="left:0px;top:680px;width:81px;background:#d2e6ee;">360-01-0035</div>
<div class="dc dl" style="left:81px;top:680px;width:185px;background:#d2e6ee;">Employee</div>
<div class="dc dl" style="left:266px;top:680px;width:185px;background:#d2e6ee;">Ohio</div>
<div class="dc dl" style="left:451px;top:680px;width:91px;background:#d2e6ee;letter-spacing:0.55px;">MiddleName</div>
<div class="dc dl" style="left:542px;top:680px;width:84px;background:#d2e6ee;">Sr.</div>
<div class="dc dl" style="left:626px;top:680px;width:110px;background:#d2e6ee;">324 Training Drive</div>
<div class="dc dl" style="left:736px;top:680px;width:101px;background:#d2e6ee;"></div>
<div class="dc dl" style="left:0px;top:700px;width:81px;background:#d2e6ee;">370-01-0036</div>
<div class="dc dl" style="left:81px;top:700px;width:185px;background:#d2e6ee;">Employee</div>
<div class="dc dl" style="left:266px;top:700px;width:185px;background:#d2e6ee;">Oklahoma</div>
<div class="dc dl" style="left:451px;top:700px;width:91px;background:#d2e6ee;letter-spacing:0.55px;">MiddleName</div>
<div class="dc dl" style="left:542px;top:700px;width:84px;background:#d2e6ee;">Sr.</div>
<div class="dc dl" style="left:626px;top:700px;width:110px;background:#d2e6ee;">3423 South 4th Street</div>
<div class="dc dl" style="left:736px;top:700px;width:101px;background:#d2e6ee;"></div>
<div class="dc dl" style="left:0px;top:720px;width:81px;background:#d2e6ee;">380-01-0037</div>
<div class="dc dl" style="left:81px;top:720px;width:185px;background:#d2e6ee;">Employee</div>
<div class="dc dl" style="left:266px;top:720px;width:185px;background:#d2e6ee;">Oregon</div>
<div class="dc dl" style="left:451px;top:720px;width:91px;background:#d2e6ee;letter-spacing:0.55px;">MiddleName</div>
<div class="dc dl" style="left:542px;top:720px;width:84px;background:#d2e6ee;">Sr.</div>
<div class="dc dl" style="left:626px;top:720px;width:110px;background:#d2e6ee;">343 34th Street</div>
<div class="dc dl" style="left:736px;top:720px;width:101px;background:#d2e6ee;"></div>
<div class="dc dl" style="left:0px;top:740px;width:81px;background:#d2e6ee;">390-01-0038</div>
<div class="dc dl" style="left:81px;top:740px;width:185px;background:#d2e6ee;">Employee</div>
<div class="dc dl" style="left:266px;top:740px;width:185px;background:#d2e6ee;">Pennsylvania</div>
<div class="dc dl" style="left:451px;top:740px;width:91px;background:#d2e6ee;letter-spacing:0.55px;">MiddleName</div>
<div class="dc dl" style="left:542px;top:740px;width:84px;background:#d2e6ee;">Sr.</div>
<div class="dc dl" style="left:626px;top:740px;width:110px;background:#d2e6ee;">3243 College Way</div>
<div class="dc dl" style="left:736px;top:740px;width:101px;background:#d2e6ee;"></div>
<div class="dc dl" style="left:0px;top:760px;width:81px;background:#d2e6ee;">400-01-0039</div>
<div class="dc dl" style="left:81px;top:760px;width:185px;background:#d2e6ee;">Employee</div>
<div class="dc dl" style="left:266px;top:760px;width:185px;background:#d2e6ee;">Rhode Island</div>
<div class="dc dl" style="left:451px;top:760px;width:91px;background:#d2e6ee;letter-spacing:0.55px;">MiddleName</div>
<div class="dc dl" style="left:542px;top:760px;width:84px;background:#d2e6ee;">Sr.</div>
<div class="dc dl" style="left:626px;top:760px;width:110px;background:#d2e6ee;">3434 Cowboy Drive</div>
<div class="dc dl" style="left:736px;top:760px;width:101px;background:#d2e6ee;"></div>
<div class="dc dl" style="left:0px;top:780px;width:81px;background:#d2e6ee;">410-01-0040</div>
<div class="dc dl" style="left:81px;top:780px;width:185px;background:#d2e6ee;">Employee</div>
<div class="dc dl" style="left:266px;top:780px;width:185px;background:#d2e6ee;">South Carolina</div>
<div class="dc dl" style="left:451px;top:780px;width:91px;background:#d2e6ee;letter-spacing:0.55px;">MiddleName</div>
<div class="dc dl" style="left:542px;top:780px;width:84px;background:#d2e6ee;">Sr.</div>
<div class="dc dl" style="left:626px;top:780px;width:110px;background:#d2e6ee;">3243 River Drive</div>
<div class="dc dl" style="left:736px;top:780px;width:101px;background:#d2e6ee;"></div>
</div>
<div class="rh" style="top:203px">1</div>
<div class="rh" style="top:223px">2</div>
<div class="rh" style="top:243px">3</div>
<div class="rh" style="top:263px">4</div>
<div class="rh" style="top:283px">5</div>
<div class="rh" style="top:303px">6</div>
<div class="rh" style="top:323px">7</div>
<div class="rh" style="top:343px">8</div>
<div class="rh" style="top:363px">9</div>
<div class="rh" style="top:383px">10</div>
<div class="rh" style="top:403px">11</div>
<div class="rh" style="top:423px">12</div>
<div class="rh" style="top:443px">13</div>
<div class="rh" style="top:463px">14</div>
<div class="rh" style="top:483px">15</div>
<div class="rh" style="top:503px">16</div>
<div class="rh" style="top:523px">17</div>
<div class="rh" style="top:543px">18</div>
<div class="rh" style="top:563px">19</div>
<div class="rh" style="top:583px">20</div>
<div class="rh" style="top:603px">21</div>
<div class="rh" style="top:623px">22</div>
<div class="rh" style="top:643px">23</div>
<div class="rh" style="top:663px">24</div>
<div class="rh" style="top:683px">25</div>
<div class="rh" style="top:703px">26</div>
<div class="rh" style="top:723px">27</div>
<div class="rh" style="top:743px">28</div>
<div class="rh" style="top:763px">29</div>
<div class="rh" style="top:783px">30</div>
<div class="rh" style="top:803px">31</div>
<div class="rh" style="top:823px">32</div>
<div class="rh" style="top:843px">33</div>
<div class="rh" style="top:863px">34</div>
<div class="rh" style="top:883px">35</div>
<div class="rh" style="top:903px">36</div>
<div class="rh" style="top:923px">37</div>
<div class="rh" style="top:943px">38</div>
<div class="rh" style="top:963px">39</div>
<div class="rh" style="top:983px">40</div>
<div class="a" style="left:861px;top:127px;width:5px;height:892px;background:#f2f2f2;border-left:2px solid #fff"></div>
<div class="a" style="left:866px;top:127px;width:2px;height:892px;background:#646464"></div>
<div class="a" style="left:868px;top:127px;width:1033px;height:875px;background:#fff"></div>
<div class="a last" style="left:868px;top:127px;width:1033px;height:876px;overflow:hidden">
<div class="hc tot" style="left:0px;top:1px;width:84px;height:25px;letter-spacing:0.5px;">$488431.08</div>
<div class="hc gr" style="left:0px;top:26px;width:84px;height:25px;">Box 1</div>
<div class="hc gr" style="left:0px;top:51px;width:84px;height:25px;">Fed Wages</div>
<div class="hc tot" style="left:84px;top:1px;width:91px;height:25px;letter-spacing:0.5px;">$19340.06</div>
<div class="hc gr" style="left:84px;top:26px;width:91px;height:25px;">Box 2</div>
<div class="hc gr" style="left:84px;top:51px;width:91px;height:25px;">Fed Withheld</div>
<div class="hc tot" style="left:175px;top:1px;width:84px;height:25px;letter-spacing:0.5px;">$483854.00</div>
<div class="hc gr" style="left:175px;top:26px;width:84px;height:25px;">Box 3</div>
<div class="hc gr" style="left:175px;top:51px;width:84px;height:25px;">SS Wages</div>
<div class="hc tot" style="left:259px;top:1px;width:84px;height:25px;letter-spacing:0.5px;">$30406.72</div>
<div class="hc gr" style="left:259px;top:26px;width:84px;height:25px;">Box 4</div>
<div class="hc gr" style="left:259px;top:51px;width:84px;height:25px;">SS Withheld</div>
<div class="hc tot" style="left:343px;top:1px;width:107px;height:25px;letter-spacing:0.5px;">$55123964.00</div>
<div class="hc gr" style="left:343px;top:26px;width:107px;height:25px;">Box 5</div>
<div class="hc gr" style="left:343px;top:51px;width:107px;height:25px;">Medicare Wages</div>
<div class="hc tot" style="left:450px;top:1px;width:125px;height:25px;letter-spacing:0.5px;">$9391.25</div>
<div class="hc gr" style="left:450px;top:26px;width:125px;height:25px;">Box 6</div>
<div class="hc gr" style="left:450px;top:51px;width:125px;height:25px;">Medicare Withheld</div>
<div class="hc tot" style="left:575px;top:1px;width:52px;height:25px;"></div>
<div class="hc gr" style="left:575px;top:26px;width:52px;height:25px;">Box 7</div>
<div class="hc gr" style="left:575px;top:51px;width:52px;height:25px;">SS Tips</div>
<div class="hc tot" style="left:627px;top:1px;width:168px;height:25px;"></div>
<div class="hc gr" style="left:627px;top:26px;width:168px;height:25px;padding-right:18px">Box 12FF</div>
<div class="a" style="left:776px;top:26px;width:18px;height:24px;background:#f0f0f0;border-left:2px solid #fff;border-top:1px solid #fff;border-bottom:1px solid #a0a0a0"></div>
<svg class="a" style="left:781px;top:36px" width="9" height="4" viewBox="0 0 9 4"><path d="M0 0 H9 V1 H7 L5 3 H4 L2 1 H0 Z" fill="#000"/></svg>
<div class="hc gr" style="left:627px;top:51px;width:168px;height:25px;">W2 Box 12 FF</div>
<div class="hc tot" style="left:795px;top:1px;width:168px;height:25px;letter-spacing:0.5px;">$191.52</div>
<div class="hc gr" style="left:795px;top:26px;width:168px;height:25px;padding-right:18px">Box 14</div>
<div class="a" style="left:944px;top:26px;width:18px;height:24px;background:#f0f0f0;border-left:2px solid #fff;border-top:1px solid #fff;border-bottom:1px solid #a0a0a0"></div>
<svg class="a" style="left:949px;top:36px" width="9" height="4" viewBox="0 0 9 4"><path d="M0 0 H9 V1 H7 L5 3 H4 L2 1 H0 Z" fill="#000"/></svg>
<div class="hc gr" style="left:795px;top:51px;width:168px;height:25px;">HlthIn</div>
<div class="hc tot" style="left:963px;top:1px;width:149px;height:25px;"></div>
<div class="hc gr" style="left:963px;top:26px;width:149px;height:25px;text-align:left;padding-left:53px;">Box 15</div>
<div class="hc gr" style="left:963px;top:51px;width:149px;height:25px;text-align:left;padding-left:48px;">UI/WF/SWF</div>
</div>
<div class="a" style="left:868px;top:203px;width:1033px;height:799px;overflow:hidden">
<div class="dc dr" style="left:0px;top:0px;width:84px;background:#fff">9577.08</div>
<div class="dc dr" style="left:84px;top:0px;width:91px;background:#fff">287.28</div>
<div class="dc dr" style="left:175px;top:0px;width:84px;background:#fff">9577.08</div>
<div class="dc dr" style="left:259px;top:0px;width:84px;background:#fff">593.76</div>
<div class="dc dr" style="left:343px;top:0px;width:107px;background:#fff">9577.08</div>
<div class="dc dr" style="left:450px;top:0px;width:125px;background:#fff"></div>
<div class="dc dr" style="left:575px;top:0px;width:52px;background:#fff"></div>
<div class="dc dr" style="left:627px;top:0px;width:168px;background:#fff"></div>
<div class="dc dr" style="left:795px;top:0px;width:168px;background:#fff"></div>
<div class="dc dr" style="left:963px;top:0px;width:149px;background:#fff"></div>
<div class="dc dr" style="left:0px;top:20px;width:84px;background:#fff">9577.08</div>
<div class="dc dr" style="left:84px;top:20px;width:91px;background:#fff">5000.00</div>
<div class="dc dr" style="left:175px;top:20px;width:84px;background:#fff">9577.08</div>
<div class="dc dr" style="left:259px;top:20px;width:84px;background:#fff">593.76</div>
<div class="dc dr" style="left:343px;top:20px;width:107px;background:#fff">9577.08</div>
<div class="dc dr" style="left:450px;top:20px;width:125px;background:#fff">138.84</div>
<div class="dc dr" style="left:575px;top:20px;width:52px;background:#fff"></div>
<div class="dc dr" style="left:627px;top:20px;width:168px;background:#fff"></div>
<div class="dc dr" style="left:795px;top:20px;width:168px;background:#fff"></div>
<div class="dc dr" style="left:963px;top:20px;width:149px;background:#fff"></div>
<div class="dc dr" style="left:0px;top:40px;width:84px;background:#fff">9577.08</div>
<div class="dc dr" style="left:84px;top:40px;width:91px;background:#fff">287.28</div>
<div class="dc dr" style="left:175px;top:40px;width:84px;background:#fff">9577.08</div>
<div class="dc dr" style="left:259px;top:40px;width:84px;background:#fff">593.76</div>
<div class="dc dr" style="left:343px;top:40px;width:107px;background:#fff">9577.08</div>
<div class="dc dr" style="left:450px;top:40px;width:125px;background:#fff">138.84</div>
<div class="dc dr" style="left:575px;top:40px;width:52px;background:#fff"></div>
<div class="dc dr" style="left:627px;top:40px;width:168px;background:#fff"></div>
<div class="dc dr" style="left:795px;top:40px;width:168px;background:#fff"></div>
<div class="dc dr" style="left:963px;top:40px;width:149px;background:#fff"></div>
<div class="dc dr" style="left:0px;top:60px;width:84px;background:#a7e0e8">9577.08</div>
<div class="dc dr" style="left:84px;top:60px;width:91px;background:#a7e0e8">287.28</div>
<div class="dc dr" style="left:175px;top:60px;width:84px;background:#a7e0e8">9577.08</div>
<div class="dc dr" style="left:259px;top:60px;width:84px;background:#a7e0e8">2500.00</div>
<div class="dc dr" style="left:343px;top:60px;width:107px;background:#a7e0e8">9577.08</div>
<div class="dc dr" style="left:450px;top:60px;width:125px;background:#a7e0e8">138.84</div>
<div class="dc dr" style="left:575px;top:60px;width:52px;background:#a7e0e8"></div>
<div class="dc dr" style="left:627px;top:60px;width:168px;background:#a7e0e8"></div>
<div class="dc dr" style="left:795px;top:60px;width:168px;background:#a7e0e8"></div>
<div class="dc dr" style="left:963px;top:60px;width:149px;background:#a7e0e8"></div>
<div class="dc dr" style="left:0px;top:80px;width:84px;background:#fff">9577.08</div>
<div class="dc dr" style="left:84px;top:80px;width:91px;background:#fff">263.34</div>
<div class="dc dr" style="left:175px;top:80px;width:84px;background:#fff">9577.08</div>
<div class="dc dr" style="left:259px;top:80px;width:84px;background:#fff">593.76</div>
<div class="dc dr" style="left:343px;top:80px;width:107px;background:#fff">9577.08</div>
<div class="dc dr" style="left:450px;top:80px;width:125px;background:#fff">138.84</div>
<div class="dc dr" style="left:575px;top:80px;width:52px;background:#fff"></div>
<div class="dc dr" style="left:627px;top:80px;width:168px;background:#fff"></div>
<div class="dc dr" style="left:795px;top:80px;width:168px;background:#fff"></div>
<div class="dc dr" style="left:963px;top:80px;width:149px;background:#fff"></div>
<div class="dc dr" style="left:0px;top:100px;width:84px;background:#fff">9577.08</div>
<div class="dc dr" style="left:84px;top:100px;width:91px;background:#fff">287.28</div>
<div class="dc dr" style="left:175px;top:100px;width:84px;background:#fff">9577.08</div>
<div class="dc dr" style="left:259px;top:100px;width:84px;background:#fff">593.76</div>
<div class="dc dr" style="left:343px;top:100px;width:107px;background:#fff">9577.08</div>
<div class="dc dr" style="left:450px;top:100px;width:125px;background:#fff">138.84</div>
<div class="dc dr" style="left:575px;top:100px;width:52px;background:#fff"></div>
<div class="dc dr" style="left:627px;top:100px;width:168px;background:#fff"></div>
<div class="dc dr" style="left:795px;top:100px;width:168px;background:#fff"></div>
<div class="dc dr" style="left:963px;top:100px;width:149px;background:#fff"></div>
<div class="dc dr" style="left:0px;top:120px;width:84px;background:#fff">9577.08</div>
<div class="dc dr" style="left:84px;top:120px;width:91px;background:#fff">287.28</div>
<div class="dc dr" style="left:175px;top:120px;width:84px;background:#fff">9577.08</div>
<div class="dc dr" style="left:259px;top:120px;width:84px;background:#fff">593.76</div>
<div class="dc dr" style="left:343px;top:120px;width:107px;background:#fff">9577.08</div>
<div class="dc dr" style="left:450px;top:120px;width:125px;background:#fff">138.84</div>
<div class="dc dr" style="left:575px;top:120px;width:52px;background:#fff"></div>
<div class="dc dr" style="left:627px;top:120px;width:168px;background:#fff"></div>
<div class="dc dr" style="left:795px;top:120px;width:168px;background:#fff"></div>
<div class="dc dr" style="left:963px;top:120px;width:149px;background:#fff"></div>
<div class="dc dr" style="left:0px;top:140px;width:84px;background:#fff">9577.08</div>
<div class="dc dr" style="left:84px;top:140px;width:91px;background:#fff">287.28</div>
<div class="dc dr" style="left:175px;top:140px;width:84px;background:#fff">9577.08</div>
<div class="dc dr" style="left:259px;top:140px;width:84px;background:#fff">593.76</div>
<div class="dc dr" style="left:343px;top:140px;width:107px;background:#fff">9577.08</div>
<div class="dc dr" style="left:450px;top:140px;width:125px;background:#fff">3000.00</div>
<div class="dc dr" style="left:575px;top:140px;width:52px;background:#fff"></div>
<div class="dc dr" style="left:627px;top:140px;width:168px;background:#fff"></div>
<div class="dc dr" style="left:795px;top:140px;width:168px;background:#fff"></div>
<div class="dc dr" style="left:963px;top:140px;width:149px;background:#fff"></div>
<div class="dc dr" style="left:0px;top:160px;width:84px;background:#fff">9577.08</div>
<div class="dc dr" style="left:84px;top:160px;width:91px;background:#fff">287.28</div>
<div class="dc dr" style="left:175px;top:160px;width:84px;background:#fff">9577.08</div>
<div class="dc dr" style="left:259px;top:160px;width:84px;background:#fff">593.76</div>
<div class="dc dr" style="left:343px;top:160px;width:107px;background:#fff">9577.08</div>
<div class="dc dr" style="left:450px;top:160px;width:125px;background:#fff">138.84</div>
<div class="dc dr" style="left:575px;top:160px;width:52px;background:#fff"></div>
<div class="dc dr" style="left:627px;top:160px;width:168px;background:#fff"></div>
<div class="dc dr" style="left:795px;top:160px;width:168px;background:#fff"></div>
<div class="dc dr" style="left:963px;top:160px;width:149px;background:#fff"></div>
<div class="dc dr" style="left:0px;top:180px;width:84px;background:#fff">9577.08</div>
<div class="dc dr" style="left:84px;top:180px;width:91px;background:#fff">287.28</div>
<div class="dc dr" style="left:175px;top:180px;width:84px;background:#fff">9577.08</div>
<div class="dc dr" style="left:259px;top:180px;width:84px;background:#fff">593.76</div>
<div class="dc dr" style="left:343px;top:180px;width:107px;background:#fff">9577.08</div>
<div class="dc dr" style="left:450px;top:180px;width:125px;background:#fff">138.84</div>
<div class="dc dr" style="left:575px;top:180px;width:52px;background:#fff"></div>
<div class="dc dr" style="left:627px;top:180px;width:168px;background:#fff"></div>
<div class="dc dr" style="left:795px;top:180px;width:168px;background:#fff"></div>
<div class="dc dr" style="left:963px;top:180px;width:149px;background:#fff"></div>
<div class="dc dr" style="left:0px;top:200px;width:84px;background:#fff">9577.08</div>
<div class="dc dr" style="left:84px;top:200px;width:91px;background:#fff">287.28</div>
<div class="dc dr" style="left:175px;top:200px;width:84px;background:#fff">9577.08</div>
<div class="dc dr" style="left:259px;top:200px;width:84px;background:#fff">593.76</div>
<div class="dc dr" style="left:343px;top:200px;width:107px;background:#fff">9577.08</div>
<div class="dc dr" style="left:450px;top:200px;width:125px;background:#fff">138.84</div>
<div class="dc dr" style="left:575px;top:200px;width:52px;background:#fff"></div>
<div class="dc dr" style="left:627px;top:200px;width:168px;background:#fff"></div>
<div class="dc dr" style="left:795px;top:200px;width:168px;background:#fff"></div>
<div class="dc dr" style="left:963px;top:200px;width:149px;background:#fff"></div>
<div class="dc dr" style="left:0px;top:220px;width:84px;background:#fff">9577.08</div>
<div class="dc dr" style="left:84px;top:220px;width:91px;background:#fff">287.28</div>
<div class="dc dr" style="left:175px;top:220px;width:84px;background:#fff">9577.08</div>
<div class="dc dr" style="left:259px;top:220px;width:84px;background:#fff">593.76</div>
<div class="dc dr" style="left:343px;top:220px;width:107px;background:#fff">9577.08</div>
<div class="dc dr" style="left:450px;top:220px;width:125px;background:#fff">138.84</div>
<div class="dc dr" style="left:575px;top:220px;width:52px;background:#fff"></div>
<div class="dc dr" style="left:627px;top:220px;width:168px;background:#fff"></div>
<div class="dc dr" style="left:795px;top:220px;width:168px;background:#fff"></div>
<div class="dc dr" style="left:963px;top:220px;width:149px;background:#fff"></div>
<div class="dc dr" style="left:0px;top:240px;width:84px;background:#fff">9577.08</div>
<div class="dc dr" style="left:84px;top:240px;width:91px;background:#fff">287.28</div>
<div class="dc dr" style="left:175px;top:240px;width:84px;background:#fff">9577.08</div>
<div class="dc dr" style="left:259px;top:240px;width:84px;background:#fff">593.76</div>
<div class="dc dr" style="left:343px;top:240px;width:107px;background:#fff">9577.08</div>
<div class="dc dr" style="left:450px;top:240px;width:125px;background:#fff">138.84</div>
<div class="dc dr" style="left:575px;top:240px;width:52px;background:#fff"></div>
<div class="dc dr" style="left:627px;top:240px;width:168px;background:#fff"></div>
<div class="dc dr" style="left:795px;top:240px;width:168px;background:#fff"></div>
<div class="dc dr" style="left:963px;top:240px;width:149px;background:#fff"></div>
<div class="dc dr" style="left:0px;top:260px;width:84px;background:#fff">9577.08</div>
<div class="dc dr" style="left:84px;top:260px;width:91px;background:#fff">287.28</div>
<div class="dc dr" style="left:175px;top:260px;width:84px;background:#fff">9577.08</div>
<div class="dc dr" style="left:259px;top:260px;width:84px;background:#fff"></div>
<div class="dc dr" style="left:343px;top:260px;width:107px;background:#fff">9577.08</div>
<div class="dc dr" style="left:450px;top:260px;width:125px;background:#fff"></div>
<div class="dc dr" style="left:575px;top:260px;width:52px;background:#fff"></div>
<div class="dc dr" style="left:627px;top:260px;width:168px;background:#fff"></div>
<div class="dc dr" style="left:795px;top:260px;width:168px;background:#fff"></div>
<div class="dc dr" style="left:963px;top:260px;width:149px;background:#fff"></div>
<div class="dc dr" style="left:0px;top:280px;width:84px;background:#fff">9577.08</div>
<div class="dc dr" style="left:84px;top:280px;width:91px;background:#fff">287.28</div>
<div class="dc dr" style="left:175px;top:280px;width:84px;background:#fff">9577.08</div>
<div class="dc dr" style="left:259px;top:280px;width:84px;background:#fff">593.76</div>
<div class="dc dr" style="left:343px;top:280px;width:107px;background:#fff">9577.08</div>
<div class="dc dr" style="left:450px;top:280px;width:125px;background:#fff">138.84</div>
<div class="dc dr" style="left:575px;top:280px;width:52px;background:#fff"></div>
<div class="dc dr" style="left:627px;top:280px;width:168px;background:#fff"></div>
<div class="dc dr" style="left:795px;top:280px;width:168px;background:#fff"></div>
<div class="dc dr" style="left:963px;top:280px;width:149px;background:#fff"></div>
<div class="dc dr" style="left:0px;top:300px;width:84px;background:#fff">9577.08</div>
<div class="dc dr" style="left:84px;top:300px;width:91px;background:#fff">287.28</div>
<div class="dc dr" style="left:175px;top:300px;width:84px;background:#fff">9577.08</div>
<div class="dc dr" style="left:259px;top:300px;width:84px;background:#fff">593.76</div>
<div class="dc dr" style="left:343px;top:300px;width:107px;background:#fff">9577.08</div>
<div class="dc dr" style="left:450px;top:300px;width:125px;background:#fff">138.84</div>
<div class="dc dr" style="left:575px;top:300px;width:52px;background:#fff"></div>
<div class="dc dr" style="left:627px;top:300px;width:168px;background:#fff"></div>
<div class="dc dr" style="left:795px;top:300px;width:168px;background:#fff"></div>
<div class="dc dr" style="left:963px;top:300px;width:149px;background:#fff"></div>
<div class="dc dr" style="left:0px;top:320px;width:84px;background:#fff">9577.08</div>
<div class="dc dr" style="left:84px;top:320px;width:91px;background:#fff">287.28</div>
<div class="dc dr" style="left:175px;top:320px;width:84px;background:#fff">9577.08</div>
<div class="dc dr" style="left:259px;top:320px;width:84px;background:#fff">593.76</div>
<div class="dc dr" style="left:343px;top:320px;width:107px;background:#fff">9577.08</div>
<div class="dc dr" style="left:450px;top:320px;width:125px;background:#fff">139.52</div>
<div class="dc dr" style="left:575px;top:320px;width:52px;background:#fff"></div>
<div class="dc dr" style="left:627px;top:320px;width:168px;background:#fff"></div>
<div class="dc dr" style="left:795px;top:320px;width:168px;background:#fff"></div>
<div class="dc dr" style="left:963px;top:320px;width:149px;background:#fff"></div>
<div class="dc dr" style="left:0px;top:340px;width:84px;background:#fff">9577.08</div>
<div class="dc dr" style="left:84px;top:340px;width:91px;background:#fff">287.28</div>
<div class="dc dr" style="left:175px;top:340px;width:84px;background:#fff">9577.08</div>
<div class="dc dr" style="left:259px;top:340px;width:84px;background:#fff">593.76</div>
<div class="dc dr" style="left:343px;top:340px;width:107px;background:#fff">54645110.00</div>
<div class="dc dr" style="left:450px;top:340px;width:125px;background:#fff">139.51</div>
<div class="dc dr" style="left:575px;top:340px;width:52px;background:#fff"></div>
<div class="dc dr" style="left:627px;top:340px;width:168px;background:#fff"></div>
<div class="dc dr" style="left:795px;top:340px;width:168px;background:#fff"></div>
<div class="dc dr" style="left:963px;top:340px;width:149px;background:#fff"></div>
<div class="dc dr" style="left:0px;top:360px;width:84px;background:#fff">9577.08</div>
<div class="dc dr" style="left:84px;top:360px;width:91px;background:#fff">287.28</div>
<div class="dc dr" style="left:175px;top:360px;width:84px;background:#fff">9577.08</div>
<div class="dc dr" style="left:259px;top:360px;width:84px;background:#fff">593.76</div>
<div class="dc dr" style="left:343px;top:360px;width:107px;background:#fff">9577.08</div>
<div class="dc dr" style="left:450px;top:360px;width:125px;background:#fff">142.10</div>
<div class="dc dr" style="left:575px;top:360px;width:52px;background:#fff"></div>
<div class="dc dr" style="left:627px;top:360px;width:168px;background:#fff"></div>
<div class="dc dr" style="left:795px;top:360px;width:168px;background:#fff">191.52</div>
<div class="dc dr" style="left:963px;top:360px;width:149px;background:#fff"></div>
<div class="dc dr" style="left:0px;top:380px;width:84px;background:#fff">9577.08</div>
<div class="dc dr" style="left:84px;top:380px;width:91px;background:#fff">287.28</div>
<div class="dc dr" style="left:175px;top:380px;width:84px;background:#fff">9577.08</div>
<div class="dc dr" style="left:259px;top:380px;width:84px;background:#fff"></div>
<div class="dc dr" style="left:343px;top:380px;width:107px;background:#fff">9577.08</div>
<div class="dc dr" style="left:450px;top:380px;width:125px;background:#fff"></div>
<div class="dc dr" style="left:575px;top:380px;width:52px;background:#fff"></div>
<div class="dc dr" style="left:627px;top:380px;width:168px;background:#fff"></div>
<div class="dc dr" style="left:795px;top:380px;width:168px;background:#fff"></div>
<div class="dc dr" style="left:963px;top:380px;width:149px;background:#fff"></div>
<div class="dc dr" style="left:0px;top:400px;width:84px;background:#fff">9577.08</div>
<div class="dc dr" style="left:84px;top:400px;width:91px;background:#fff">287.28</div>
<div class="dc dr" style="left:175px;top:400px;width:84px;background:#fff">9577.08</div>
<div class="dc dr" style="left:259px;top:400px;width:84px;background:#fff">593.76</div>
<div class="dc dr" style="left:343px;top:400px;width:107px;background:#fff">9577.08</div>
<div class="dc dr" style="left:450px;top:400px;width:125px;background:#fff">138.84</div>
<div class="dc dr" style="left:575px;top:400px;width:52px;background:#fff"></div>
<div class="dc dr" style="left:627px;top:400px;width:168px;background:#fff"></div>
<div class="dc dr" style="left:795px;top:400px;width:168px;background:#fff"></div>
<div class="dc dr" style="left:963px;top:400px;width:149px;background:#fff"></div>
<div class="dc dr" style="left:0px;top:420px;width:84px;background:#fff">9577.08</div>
<div class="dc dr" style="left:84px;top:420px;width:91px;background:#fff">287.28</div>
<div class="dc dr" style="left:175px;top:420px;width:84px;background:#fff">9577.08</div>
<div class="dc dr" style="left:259px;top:420px;width:84px;background:#fff">593.76</div>
<div class="dc dr" style="left:343px;top:420px;width:107px;background:#fff">9577.08</div>
<div class="dc dr" style="left:450px;top:420px;width:125px;background:#fff">138.84</div>
<div class="dc dr" style="left:575px;top:420px;width:52px;background:#fff"></div>
<div class="dc dr" style="left:627px;top:420px;width:168px;background:#fff"></div>
<div class="dc dr" style="left:795px;top:420px;width:168px;background:#fff"></div>
<div class="dc dr" style="left:963px;top:420px;width:149px;background:#fff"></div>
<div class="dc dr" style="left:0px;top:440px;width:84px;background:#fff">9577.08</div>
<div class="dc dr" style="left:84px;top:440px;width:91px;background:#fff">287.28</div>
<div class="dc dr" style="left:175px;top:440px;width:84px;background:#fff">9577.08</div>
<div class="dc dr" style="left:259px;top:440px;width:84px;background:#fff">593.76</div>
<div class="dc dr" style="left:343px;top:440px;width:107px;background:#fff">9577.08</div>
<div class="dc dr" style="left:450px;top:440px;width:125px;background:#fff">138.84</div>
<div class="dc dr" style="left:575px;top:440px;width:52px;background:#fff"></div>
<div class="dc dr" style="left:627px;top:440px;width:168px;background:#fff"></div>
<div class="dc dr" style="left:795px;top:440px;width:168px;background:#fff"></div>
<div class="dc dr" style="left:963px;top:440px;width:149px;background:#fff"></div>
<div class="dc dr" style="left:0px;top:460px;width:84px;background:#fff">9577.08</div>
<div class="dc dr" style="left:84px;top:460px;width:91px;background:#fff">287.28</div>
<div class="dc dr" style="left:175px;top:460px;width:84px;background:#fff">9577.08</div>
<div class="dc dr" style="left:259px;top:460px;width:84px;background:#fff">593.76</div>
<div class="dc dr" style="left:343px;top:460px;width:107px;background:#fff">9577.08</div>
<div class="dc dr" style="left:450px;top:460px;width:125px;background:#fff">138.84</div>
<div class="dc dr" style="left:575px;top:460px;width:52px;background:#fff"></div>
<div class="dc dr" style="left:627px;top:460px;width:168px;background:#fff"></div>
<div class="dc dr" style="left:795px;top:460px;width:168px;background:#fff"></div>
<div class="dc dr" style="left:963px;top:460px;width:149px;background:#fff"></div>
<div class="dc dr" style="left:0px;top:480px;width:84px;background:#fff">9577.08</div>
<div class="dc dr" style="left:84px;top:480px;width:91px;background:#fff">287.28</div>
<div class="dc dr" style="left:175px;top:480px;width:84px;background:#fff">9577.08</div>
<div class="dc dr" style="left:259px;top:480px;width:84px;background:#fff"></div>
<div class="dc dr" style="left:343px;top:480px;width:107px;background:#fff">9577.08</div>
<div class="dc dr" style="left:450px;top:480px;width:125px;background:#fff"></div>
<div class="dc dr" style="left:575px;top:480px;width:52px;background:#fff"></div>
<div class="dc dr" style="left:627px;top:480px;width:168px;background:#fff"></div>
<div class="dc dr" style="left:795px;top:480px;width:168px;background:#fff"></div>
<div class="dc dr" style="left:963px;top:480px;width:149px;background:#fff"></div>
<div class="dc dr" style="left:0px;top:500px;width:84px;background:#fff">9577.08</div>
<div class="dc dr" style="left:84px;top:500px;width:91px;background:#fff">287.28</div>
<div class="dc dr" style="left:175px;top:500px;width:84px;background:#fff">9577.08</div>
<div class="dc dr" style="left:259px;top:500px;width:84px;background:#fff">593.76</div>
<div class="dc dr" style="left:343px;top:500px;width:107px;background:#fff">9577.08</div>
<div class="dc dr" style="left:450px;top:500px;width:125px;background:#fff">138.84</div>
<div class="dc dr" style="left:575px;top:500px;width:52px;background:#fff"></div>
<div class="dc dr" style="left:627px;top:500px;width:168px;background:#fff"></div>
<div class="dc dr" style="left:795px;top:500px;width:168px;background:#fff"></div>
<div class="dc dr" style="left:963px;top:500px;width:149px;background:#fff"></div>
<div class="dc dr" style="left:0px;top:520px;width:84px;background:#fff">9577.08</div>
<div class="dc dr" style="left:84px;top:520px;width:91px;background:#fff">287.28</div>
<div class="dc dr" style="left:175px;top:520px;width:84px;background:#fff">5000.00</div>
<div class="dc dr" style="left:259px;top:520px;width:84px;background:#fff">593.76</div>
<div class="dc dr" style="left:343px;top:520px;width:107px;background:#fff">9577.08</div>
<div class="dc dr" style="left:450px;top:520px;width:125px;background:#fff">138.84</div>
<div class="dc dr" style="left:575px;top:520px;width:52px;background:#fff"></div>
<div class="dc dr" style="left:627px;top:520px;width:168px;background:#fff"></div>
<div class="dc dr" style="left:795px;top:520px;width:168px;background:#fff"></div>
<div class="dc dr" style="left:963px;top:520px;width:149px;background:#fff"></div>
<div class="dc dr" style="left:0px;top:540px;width:84px;background:#fff">9577.08</div>
<div class="dc dr" style="left:84px;top:540px;width:91px;background:#fff">287.28</div>
<div class="dc dr" style="left:175px;top:540px;width:84px;background:#fff">9577.08</div>
<div class="dc dr" style="left:259px;top:540px;width:84px;background:#fff">593.76</div>
<div class="dc dr" style="left:343px;top:540px;width:107px;background:#fff">9577.08</div>
<div class="dc dr" style="left:450px;top:540px;width:125px;background:#fff">138.84</div>
<div class="dc dr" style="left:575px;top:540px;width:52px;background:#fff"></div>
<div class="dc dr" style="left:627px;top:540px;width:168px;background:#fff"></div>
<div class="dc dr" style="left:795px;top:540px;width:168px;background:#fff"></div>
<div class="dc dr" style="left:963px;top:540px;width:149px;background:#fff"></div>
<div class="dc dr" style="left:0px;top:560px;width:84px;background:#fff">9577.08</div>
<div class="dc dr" style="left:84px;top:560px;width:91px;background:#fff">287.28</div>
<div class="dc dr" style="left:175px;top:560px;width:84px;background:#fff">9577.08</div>
<div class="dc dr" style="left:259px;top:560px;width:84px;background:#fff">593.76</div>
<div class="dc dr" style="left:343px;top:560px;width:107px;background:#fff">9577.08</div>
<div class="dc dr" style="left:450px;top:560px;width:125px;background:#fff">138.84</div>
<div class="dc dr" style="left:575px;top:560px;width:52px;background:#fff"></div>
<div class="dc dr" style="left:627px;top:560px;width:168px;background:#fff"></div>
<div class="dc dr" style="left:795px;top:560px;width:168px;background:#fff"></div>
<div class="dc dr" style="left:963px;top:560px;width:149px;background:#fff"></div>
<div class="dc dr" style="left:0px;top:580px;width:84px;background:#fff">9577.08</div>
<div class="dc dr" style="left:84px;top:580px;width:91px;background:#fff">287.28</div>
<div class="dc dr" style="left:175px;top:580px;width:84px;background:#fff">9577.08</div>
<div class="dc dr" style="left:259px;top:580px;width:84px;background:#fff">593.76</div>
<div class="dc dr" style="left:343px;top:580px;width:107px;background:#fff">9577.08</div>
<div class="dc dr" style="left:450px;top:580px;width:125px;background:#fff">138.84</div>
<div class="dc dr" style="left:575px;top:580px;width:52px;background:#fff"></div>
<div class="dc dr" style="left:627px;top:580px;width:168px;background:#fff"></div>
<div class="dc dr" style="left:795px;top:580px;width:168px;background:#fff"></div>
<div class="dc dr" style="left:963px;top:580px;width:149px;background:#fff"></div>
<div class="dc dr" style="left:0px;top:600px;width:84px;background:#fff">9577.08</div>
<div class="dc dr" style="left:84px;top:600px;width:91px;background:#fff">287.28</div>
<div class="dc dr" style="left:175px;top:600px;width:84px;background:#fff">9577.08</div>
<div class="dc dr" style="left:259px;top:600px;width:84px;background:#fff">593.76</div>
<div class="dc dr" style="left:343px;top:600px;width:107px;background:#fff">9577.08</div>
<div class="dc dr" style="left:450px;top:600px;width:125px;background:#fff">138.84</div>
<div class="dc dr" style="left:575px;top:600px;width:52px;background:#fff"></div>
<div class="dc dr" style="left:627px;top:600px;width:168px;background:#fff"></div>
<div class="dc dr" style="left:795px;top:600px;width:168px;background:#fff"></div>
<div class="dc dr" style="left:963px;top:600px;width:149px;background:#fff"></div>
<div class="dc dr" style="left:0px;top:620px;width:84px;background:#fff">9577.08</div>
<div class="dc dr" style="left:84px;top:620px;width:91px;background:#fff">287.28</div>
<div class="dc dr" style="left:175px;top:620px;width:84px;background:#fff">9577.08</div>
<div class="dc dr" style="left:259px;top:620px;width:84px;background:#fff">593.76</div>
<div class="dc dr" style="left:343px;top:620px;width:107px;background:#fff">9577.08</div>
<div class="dc dr" style="left:450px;top:620px;width:125px;background:#fff">138.84</div>
<div class="dc dr" style="left:575px;top:620px;width:52px;background:#fff"></div>
<div class="dc dr" style="left:627px;top:620px;width:168px;background:#fff"></div>
<div class="dc dr" style="left:795px;top:620px;width:168px;background:#fff"></div>
<div class="dc dr" style="left:963px;top:620px;width:149px;background:#fff"></div>
<div class="dc dr" style="left:0px;top:640px;width:84px;background:#fff">9577.08</div>
<div class="dc dr" style="left:84px;top:640px;width:91px;background:#fff">287.28</div>
<div class="dc dr" style="left:175px;top:640px;width:84px;background:#fff">9577.08</div>
<div class="dc dr" style="left:259px;top:640px;width:84px;background:#fff">593.76</div>
<div class="dc dr" style="left:343px;top:640px;width:107px;background:#fff">9577.08</div>
<div class="dc dr" style="left:450px;top:640px;width:125px;background:#fff">138.84</div>
<div class="dc dr" style="left:575px;top:640px;width:52px;background:#fff"></div>
<div class="dc dr" style="left:627px;top:640px;width:168px;background:#fff"></div>
<div class="dc dr" style="left:795px;top:640px;width:168px;background:#fff"></div>
<div class="dc dr" style="left:963px;top:640px;width:149px;background:#fff"></div>
<div class="dc dr" style="left:0px;top:660px;width:84px;background:#fff">9577.08</div>
<div class="dc dr" style="left:84px;top:660px;width:91px;background:#fff">287.28</div>
<div class="dc dr" style="left:175px;top:660px;width:84px;background:#fff">9577.08</div>
<div class="dc dr" style="left:259px;top:660px;width:84px;background:#fff">593.76</div>
<div class="dc dr" style="left:343px;top:660px;width:107px;background:#fff">9577.08</div>
<div class="dc dr" style="left:450px;top:660px;width:125px;background:#fff">138.84</div>
<div class="dc dr" style="left:575px;top:660px;width:52px;background:#fff"></div>
<div class="dc dr" style="left:627px;top:660px;width:168px;background:#fff"></div>
<div class="dc dr" style="left:795px;top:660px;width:168px;background:#fff"></div>
<div class="dc dr" style="left:963px;top:660px;width:149px;background:#fff"></div>
<div class="dc dr" style="left:0px;top:680px;width:84px;background:#fff">9577.08</div>
<div class="dc dr" style="left:84px;top:680px;width:91px;background:#fff">287.28</div>
<div class="dc dr" style="left:175px;top:680px;width:84px;background:#fff">9577.08</div>
<div class="dc dr" style="left:259px;top:680px;width:84px;background:#fff">593.76</div>
<div class="dc dr" style="left:343px;top:680px;width:107px;background:#fff">9577.08</div>
<div class="dc dr" style="left:450px;top:680px;width:125px;background:#fff">138.84</div>
<div class="dc dr" style="left:575px;top:680px;width:52px;background:#fff"></div>
<div class="dc dr" style="left:627px;top:680px;width:168px;background:#fff"></div>
<div class="dc dr" style="left:795px;top:680px;width:168px;background:#fff"></div>
<div class="dc dr" style="left:963px;top:680px;width:149px;background:#fff"></div>
<div class="dc dr" style="left:0px;top:700px;width:84px;background:#fff">9577.08</div>
<div class="dc dr" style="left:84px;top:700px;width:91px;background:#fff">287.28</div>
<div class="dc dr" style="left:175px;top:700px;width:84px;background:#fff">9577.08</div>
<div class="dc dr" style="left:259px;top:700px;width:84px;background:#fff">593.76</div>
<div class="dc dr" style="left:343px;top:700px;width:107px;background:#fff">9577.08</div>
<div class="dc dr" style="left:450px;top:700px;width:125px;background:#fff">138.84</div>
<div class="dc dr" style="left:575px;top:700px;width:52px;background:#fff"></div>
<div class="dc dr" style="left:627px;top:700px;width:168px;background:#fff"></div>
<div class="dc dr" style="left:795px;top:700px;width:168px;background:#fff"></div>
<div class="dc dr" style="left:963px;top:700px;width:149px;background:#fff"></div>
<div class="dc dr" style="left:0px;top:720px;width:84px;background:#fff">9577.08</div>
<div class="dc dr" style="left:84px;top:720px;width:91px;background:#fff">287.28</div>
<div class="dc dr" style="left:175px;top:720px;width:84px;background:#fff">9577.08</div>
<div class="dc dr" style="left:259px;top:720px;width:84px;background:#fff">593.76</div>
<div class="dc dr" style="left:343px;top:720px;width:107px;background:#fff">9577.08</div>
<div class="dc dr" style="left:450px;top:720px;width:125px;background:#fff">138.84</div>
<div class="dc dr" style="left:575px;top:720px;width:52px;background:#fff"></div>
<div class="dc dr" style="left:627px;top:720px;width:168px;background:#fff"></div>
<div class="dc dr" style="left:795px;top:720px;width:168px;background:#fff"></div>
<div class="dc dr" style="left:963px;top:720px;width:149px;background:#fff"></div>
<div class="dc dr" style="left:0px;top:740px;width:84px;background:#fff">9577.08</div>
<div class="dc dr" style="left:84px;top:740px;width:91px;background:#fff">287.28</div>
<div class="dc dr" style="left:175px;top:740px;width:84px;background:#fff">9577.08</div>
<div class="dc dr" style="left:259px;top:740px;width:84px;background:#fff">593.76</div>
<div class="dc dr" style="left:343px;top:740px;width:107px;background:#fff">9577.08</div>
<div class="dc dr" style="left:450px;top:740px;width:125px;background:#fff">138.84</div>
<div class="dc dr" style="left:575px;top:740px;width:52px;background:#fff"></div>
<div class="dc dr" style="left:627px;top:740px;width:168px;background:#fff"></div>
<div class="dc dr" style="left:795px;top:740px;width:168px;background:#fff"></div>
<div class="dc dr" style="left:963px;top:740px;width:149px;background:#fff"></div>
<div class="dc dr" style="left:0px;top:760px;width:84px;background:#fff">9577.08</div>
<div class="dc dr" style="left:84px;top:760px;width:91px;background:#fff">287.28</div>
<div class="dc dr" style="left:175px;top:760px;width:84px;background:#fff">9577.08</div>
<div class="dc dr" style="left:259px;top:760px;width:84px;background:#fff">593.76</div>
<div class="dc dr" style="left:343px;top:760px;width:107px;background:#fff">9577.08</div>
<div class="dc dr" style="left:450px;top:760px;width:125px;background:#fff">138.84</div>
<div class="dc dr" style="left:575px;top:760px;width:52px;background:#fff"></div>
<div class="dc dr" style="left:627px;top:760px;width:168px;background:#fff"></div>
<div class="dc dr" style="left:795px;top:760px;width:168px;background:#fff"></div>
<div class="dc dr" style="left:963px;top:760px;width:149px;background:#fff"></div>
<div class="dc dr" style="left:0px;top:780px;width:84px;background:#fff">9577.08</div>
<div class="dc dr" style="left:84px;top:780px;width:91px;background:#fff">287.28</div>
<div class="dc dr" style="left:175px;top:780px;width:84px;background:#fff">9577.08</div>
<div class="dc dr" style="left:259px;top:780px;width:84px;background:#fff">593.76</div>
<div class="dc dr" style="left:343px;top:780px;width:107px;background:#fff">9577.08</div>
<div class="dc dr" style="left:450px;top:780px;width:125px;background:#fff">138.84</div>
<div class="dc dr" style="left:575px;top:780px;width:52px;background:#fff"></div>
<div class="dc dr" style="left:627px;top:780px;width:168px;background:#fff"></div>
<div class="dc dr" style="left:795px;top:780px;width:168px;background:#fff"></div>
<div class="dc dr" style="left:963px;top:780px;width:149px;background:#fff"></div>
</div>
<div class="a" style="left:1px;top:126px;width:865px;height:2px;background:#fff"></div>
<div class="a" style="left:868px;top:126px;width:1048px;height:2px;background:#fff"></div>
<div class="a" style="left:866px;top:126px;width:2px;height:2px;background:#646464"></div>
<div class="a" style="left:1901px;top:129px;width:15px;height:873px;background:#f0f0f0"></div>
<div class="a" style="left:1901px;top:145px;width:15px;height:654px;background:#cdcdcd"></div>
<div class="a" style="left:1px;top:1001px;width:861px;height:1px;background:#fff"></div>
<div class="a" style="left:1px;top:1002px;width:861px;height:17px;background:#f0f0f0"></div>
<div class="a" style="left:18px;top:1002px;width:413px;height:15px;background:#cdcdcd"></div>
<div class="a" style="left:868px;top:1002px;width:1048px;height:17px;background:#f0f0f0"></div>
<div class="a" style="left:940px;top:1002px;width:36px;height:15px;background:#cdcdcd"></div>
<svg class="a" style="left:6px;top:1006px" width="8" height="8" viewBox="0 0 8 8"><polygon points="6,0 3.8,0 0,3.5 3.8,7 6,7 2.4,3.5" fill="#606060"/></svg>
<svg class="a" style="left:850px;top:1006px" width="8" height="8" viewBox="0 0 8 8"><polygon points="0,0 2.2,0 6,3.5 2.2,7 0,7 3.6,3.5" fill="#606060"/></svg>
<svg class="a" style="left:873px;top:1006px" width="8" height="8" viewBox="0 0 8 8"><polygon points="6,0 3.8,0 0,3.5 3.8,7 6,7 2.4,3.5" fill="#606060"/></svg>
<svg class="a" style="left:1889px;top:1006px" width="8" height="8" viewBox="0 0 8 8"><polygon points="0,0 2.2,0 6,3.5 2.2,7 0,7 3.6,3.5" fill="#606060"/></svg>
<svg class="a" style="left:1905px;top:990px" width="8" height="8" viewBox="0 0 8 8"><polygon points="0,0 3.5,3.5 7,0 7,2.5 3.5,6 0,2.5" fill="#606060"/></svg>
<svg class="a" style="left:1905px;top:134px" width="8" height="8" viewBox="0 0 8 8"><polygon points="3.5,0 7,3.5 7,6 3.5,2.5 0,6 0,3.5" fill="#606060"/></svg>
<div class="a" style="left:0;top:1019px;width:1916px;height:1px;background:#fff"></div>
<div class="a" style="left:0;top:1020px;width:1916px;height:16px;background:#f0f0f0"></div>
<div class="t" style="left:4px;top:1024px;font-size:11.5px;line-height:14px">Ready</div>
<div class="a" style="left:1346px;top:1022px;width:484px;height:20px;border-left:1px solid #a0a0a0;border-top:1px solid #a0a0a0"></div>
<div class="t" style="left:1832px;top:1022px;width:24px;height:20px;border-left:1px solid #a0a0a0;border-top:1px solid #a0a0a0;font-size:10.6px;line-height:17px;padding-left:2px;color:#8a8a8a">CAP</div>
<div class="t" style="left:1858px;top:1022px;width:30px;height:20px;border-left:1px solid #a0a0a0;border-top:1px solid #a0a0a0;font-size:10.6px;line-height:17px;padding-left:2px;color:#000">NUM</div>
<div class="t" style="left:1890px;top:1022px;width:40px;height:20px;border-left:1px solid #a0a0a0;border-top:1px solid #a0a0a0;font-size:10.6px;line-height:17px;padding-left:2px;color:#8a8a8a">SCRL</div>
<div class="a" style="left:27px;top:197px;width:159px;height:160px;background:#f0f0f0;border:1px solid #d2d2d2"></div>
<div class="mi" style="top:201px;">Cut</div>
<div class="mi" style="top:223px;">Copy</div>
<div class="mi" style="top:245px;">Paste</div>
<div class="mi" style="top:267px;">Find...</div>
<div class="mi" style="top:289px;">Replace...</div>
<div class="mi" style="top:311px;background:#f2ef4a;height:19px;">Insert Row</div>
<div class="mi" style="top:333px;">Remove Row</div>
<div class="a" style="left:767px;top:448px;width:385px;height:141px;background:#f0f0f0;border:1px solid #1c85d6;box-shadow:0 0 12px 3px rgba(0,0,0,0.22)"></div>
<div class="a" style="left:768px;top:449px;width:383px;height:25px;background:#fff"></div>
<div class="t" style="left:771px;top:454px;font-size:12px;line-height:15px">Text Input</div>
<svg class="a" style="left:1130px;top:455px" width="12" height="12" viewBox="0 0 12 12"><path d="M0.5 0.5 L11.5 11.5 M11.5 0.5 L0.5 11.5" stroke="#111" stroke-width="1.1"/></svg>
<div class="t" style="left:779px;top:488px;font-size:10.4px;line-height:13px">Number of rows to insert:</div>
<div class="a" style="left:1019px;top:485px;width:120px;height:20px;background:#fff;border:1px solid #0a7ad6"></div>
<div class="t" style="left:1023px;top:488px;font-size:10.5px;line-height:13px">4</div>
<div class="a" style="left:984px;top:555px;width:73px;height:21px;background:#e1e1e1;border:2px solid #0a7ad6;text-align:center;font-size:11px;line-height:17px">OK</div>
<div class="a" style="left:1066px;top:555px;width:73px;height:21px;background:#e1e1e1;border:1px solid #adadad;text-align:center;font-size:11px;line-height:19px">Cancel</div>
</body></html>
